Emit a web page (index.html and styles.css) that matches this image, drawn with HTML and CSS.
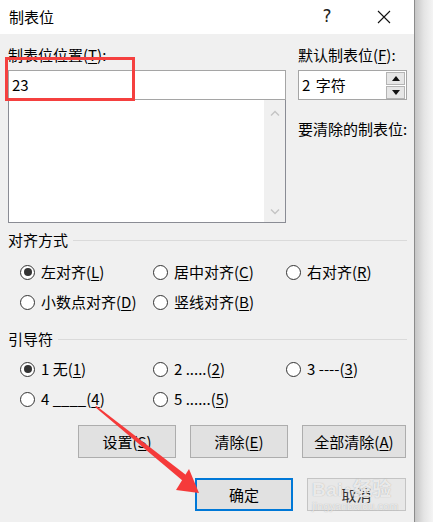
FILE: index.html
```html
<!DOCTYPE html>
<html lang="zh-CN">
<head>
<meta charset="utf-8">
<title>制表位</title>
<link rel="stylesheet" href="styles.css">
</head>
<body>
<div class="screen">
  <div class="dialog">
    <div class="titlebar">
      <span class="title">制表位</span>
      <span class="help">?</span>
      <span class="close">
        <svg width="14" height="14" viewBox="0 0 14 14"><path d="M1 1L13 13M13 1L1 13" stroke="#111" stroke-width="1.1" fill="none"/></svg>
      </span>
    </div>
    <div class="content">
      <div class="top">
        <div class="col-left">
          <div class="label">制表位位置(<u>T</u>):</div>
          <div class="input">23</div>
          <div class="listbox">
            <div class="scroll">
              <svg width="10" height="6" viewBox="0 0 10 6"><path d="M1 5.5L5 1.5L9 5.5" stroke="#c4c4c4" stroke-width="1.4" fill="none"/></svg>
              <svg width="10" height="6" viewBox="0 0 10 6"><path d="M1 0.5L5 4.5L9 0.5" stroke="#c4c4c4" stroke-width="1.4" fill="none"/></svg>
            </div>
          </div>
        </div>
        <div class="col-right">
          <div class="label">默认制表位(<u>F</u>):</div>
          <div class="spin">
            <span class="spin-val">2 字符</span>
            <div class="spin-btns">
              <div class="sb"><svg width="8" height="5" viewBox="0 0 8 5"><path d="M0 5L4 0L8 5Z" fill="#111"/></svg></div>
              <div class="sb"><svg width="8" height="5" viewBox="0 0 8 5"><path d="M0 0L4 5L8 0Z" fill="#111"/></svg></div>
            </div>
          </div>
          <div class="clear-label">要清除的制表位:</div>
        </div>
      </div>

      <div class="legend legend-1"><span>对齐方式</span><i class="rule"></i></div>
      <div class="radios radios-1">
        <label class="radio"><span class="dot on"></span>左对齐(<u>L</u>)</label>
        <label class="radio"><span class="dot"></span>居中对齐(<u>C</u>)</label>
        <label class="radio"><span class="dot"></span>右对齐(<u>R</u>)</label>
        <label class="radio"><span class="dot"></span>小数点对齐(<u>D</u>)</label>
        <label class="radio"><span class="dot"></span>竖线对齐(<u>B</u>)</label>
      </div>

      <div class="legend legend-2"><span>引导符</span><i class="rule"></i></div>
      <div class="radios radios-2">
        <label class="radio"><span class="dot on"></span>1 无(<u>1</u>)</label>
        <label class="radio"><span class="dot"></span>2 .....(<u>2</u>)</label>
        <label class="radio"><span class="dot"></span>3 ----(<u>3</u>)</label>
        <label class="radio"><span class="dot"></span>4 ____(<u>4</u>)</label>
        <label class="radio"><span class="dot"></span>5 ......(<u>5</u>)</label>
      </div>

      <div class="btn-row btn-row-1">
        <button class="btn">设置(<u>S</u>)</button>
        <button class="btn">清除(<u>E</u>)</button>
        <button class="btn btn-wide">全部清除(<u>A</u>)</button>
      </div>
      <div class="btn-row btn-row-2">
        <button class="btn btn-default">确定</button>
        <button class="btn btn-cancel">取消</button>
      </div>
    </div>

    <div class="redbox"></div>
    <svg class="arrow" width="433" height="522" viewBox="0 0 433 522">
      <path d="M95 407 L96.5 406 L186 475 L183 481 Z" fill="#f53a3a"/>
      <path d="M189 469 L176 490 L199 493 Z" fill="#f53a3a"/>
    </svg>
    <div class="watermark">
      <div class="wm-top">Bai<span class="paw">●</span>经验</div>
      <div class="wm-bottom">jingyanbaidu.com</div>
    </div>
  </div>
  <div class="shadow"></div>
</div>
</body>
</html>
```

FILE: styles.css
```css
* { box-sizing: border-box; }

html, body {
  margin: 0;
  padding: 0;
  background: #ffffff;
}

body {
  font-family: "Noto Sans CJK SC", "Noto Sans", sans-serif;
  font-size: 15px;
  line-height: 20px;
  color: #000;
}

u { text-decoration: underline; text-underline-offset: 2px; text-decoration-thickness: 1px; }

.screen {
  display: flex;
  width: 433px;
  height: 522px;
  overflow: hidden;
}

.dialog {
  position: relative;
  width: 415px;
  height: 522px;
  background: #f0f0f0;
  border-right: 1px solid #8c8c8c;
  display: flex;
  flex-direction: column;
}

.shadow {
  flex: 1;
  background: linear-gradient(to right, #c6c6c6, #e4e4e4 50%, #f4f4f4);
}

.titlebar {
  height: 34px;
  background: #fff;
  display: flex;
  align-items: center;
  padding-left: 9px;
}

.title { flex: 1; font-size: 15px; }

.help {
  width: 14px;
  font-family: "DejaVu Sans", sans-serif;
  font-size: 17px;
  font-weight: normal;
  line-height: 20px;
  color: #222;
  margin-right: 43px;
  margin-top: -2px;
  text-align: center;
}

.close {
  display: flex;
  width: 14px;
  height: 14px;
  margin-right: 23px;
}

.content {
  padding: 11px 7px 0 8px;
  display: flex;
  flex-direction: column;
}

.top {
  display: grid;
  grid-template-columns: 278px 109px;
  column-gap: 12px;
}

.label { height: 20px; white-space: nowrap; }

.input {
  margin-top: 5px;
  height: 30px;
  background: #fff;
  border: 1px solid #a5a5a5;
  padding: 4px 0 0 3px;
  line-height: 20px;
}

.listbox {
  height: 123px;
  background: #fff;
  border: 1px solid #8a8c94;
  border-top: none;
  display: flex;
  justify-content: flex-end;
}

.scroll {
  width: 21px;
  background: #f0f0f0;
  display: flex;
  flex-direction: column;
  justify-content: space-between;
  align-items: center;
  padding: 10px 0 7px;
}

.spin {
  margin-top: 5px;
  height: 30px;
  background: #fff;
  border: 1px solid #a5a5a5;
  display: flex;
  align-items: center;
  padding-left: 3px;
}

.spin-val { flex: 1; word-spacing: 2px; }

.spin-btns {
  display: flex;
  flex-direction: column;
  gap: 1px;
  margin-right: 1px;
}

.sb {
  width: 19px;
  height: 13px;
  background: #e6e6e6;
  border: 1px solid #b4b4b4;
  display: flex;
  align-items: center;
  justify-content: center;
}

.clear-label {
  margin-top: 19px;
  white-space: nowrap;
}

.legend {
  display: flex;
  align-items: center;
  height: 20px;
}

.legend .rule {
  flex: 1;
  height: 1px;
  background: #dadada;
  margin-left: 5px;
}

.legend-1 { margin-top: 7px; }
.legend-2 { margin-top: 12px; }

.radios {
  display: grid;
  grid-template-columns: 133px 133px 133px;
  grid-auto-rows: 30px;
  padding-left: 12px;
}

.radios-1 { margin-top: 7px; }
.radios-2 { margin-top: 5px; }

.radio {
  display: flex;
  align-items: center;
  white-space: nowrap;
}

.dot {
  width: 15px;
  height: 15px;
  border: 1px solid #333;
  border-radius: 50%;
  background: #fff;
  margin-right: 6px;
  display: flex;
  align-items: center;
  justify-content: center;
}

.dot.on::after {
  content: "";
  width: 8px;
  height: 8px;
  border-radius: 50%;
  background: #333;
}

.btn-row {
  display: flex;
  justify-content: flex-end;
  gap: 14px;
  padding-right: 1px;
}

.btn-row-1 { margin-top: 11px; }
.btn-row-2 { margin-top: 20px; }

.btn {
  font: inherit;
  color: #000;
  width: 98px;
  height: 33px;
  padding: 0;
  background: #e1e1e1;
  border: 1px solid #adadad;
}

.btn-wide { width: 104px; }

.btn-default {
  border: 2px solid #0078d7;
}

.btn-cancel {
  width: 99px;
  background: #e8e8e8;
  border-color: #c4c4c4;
  color: #333;
}

.redbox {
  position: absolute;
  left: 5px;
  top: 57px;
  width: 130px;
  height: 44px;
  border: 3px solid #f5403f;
}

.arrow {
  position: absolute;
  left: 0;
  top: 0;
  pointer-events: none;
}

.watermark {
  position: absolute;
  left: 312px;
  top: 479px;
  width: 95px;
  color: rgba(255, 255, 255, 0.75);
  font-family: "Liberation Sans", "Noto Sans CJK SC", sans-serif;
  text-shadow: 0 0 1px rgba(120,120,120,0.6);
  pointer-events: none;
}

.wm-top {
  font-size: 19px;
  line-height: 20px;
  font-weight: bold;
  letter-spacing: 0.5px;
}

.paw { font-size: 12px; margin: 0 1px; vertical-align: 3px; }

.wm-bottom {
  font-size: 10.5px;
  line-height: 12px;
  letter-spacing: 0.3px;
}
```
